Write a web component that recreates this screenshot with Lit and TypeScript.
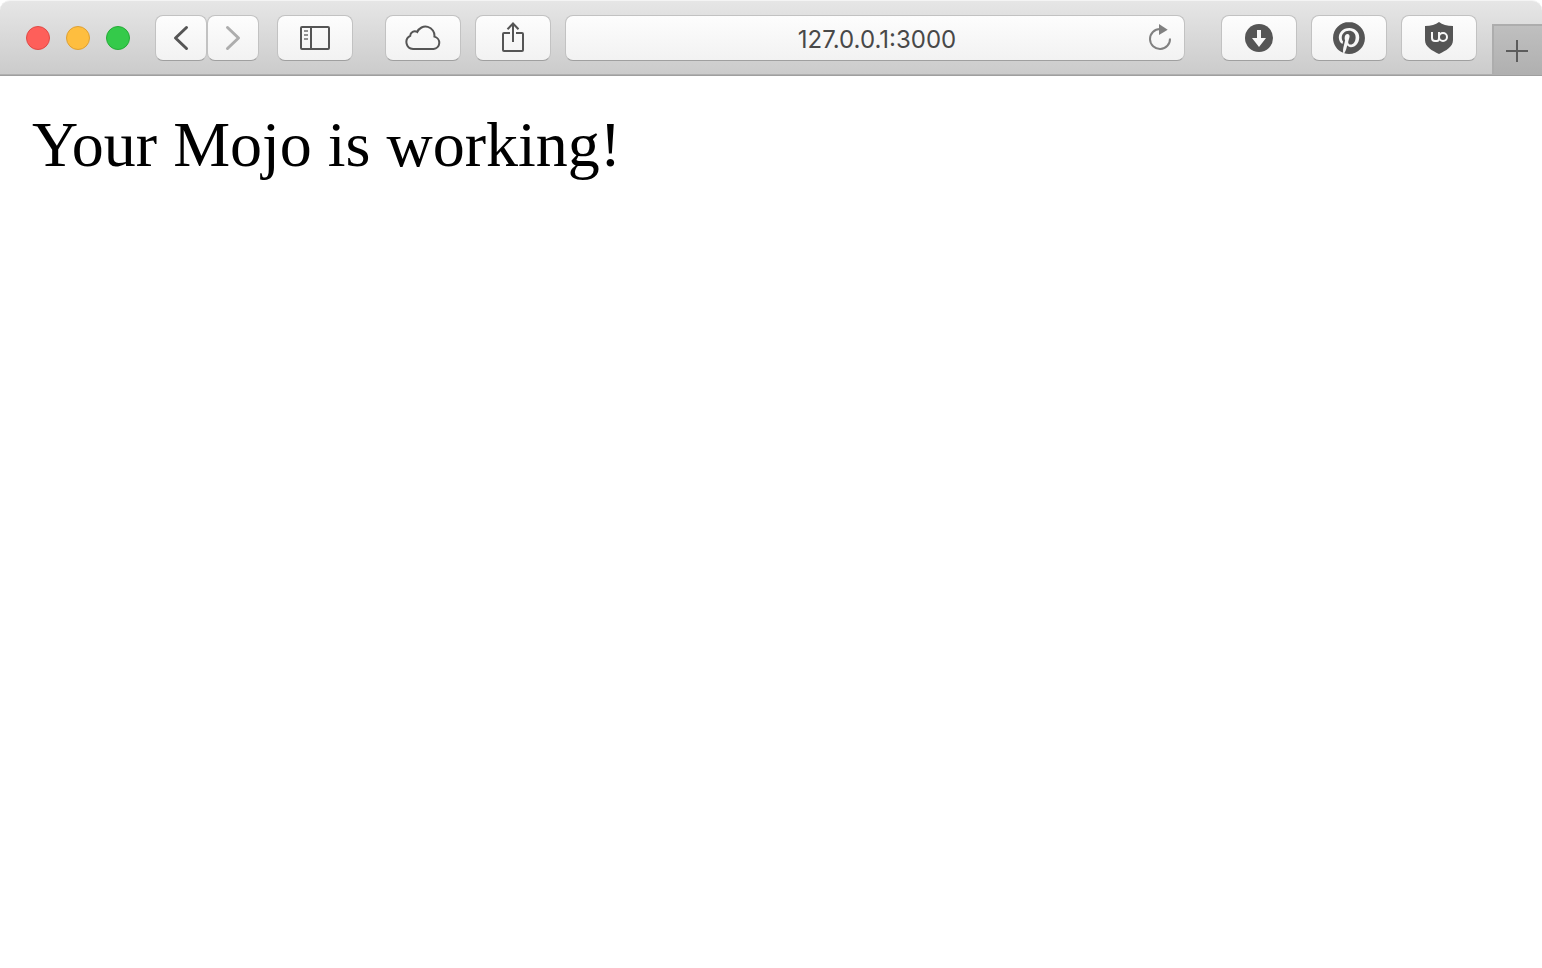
import { LitElement, html, css, svg } from "lit";
import { customElement } from "lit/decorators.js";

const icons = {
  back: svg`<path d="M23.5 7.5 12.5 18l11 10.5" stroke-width="3" stroke-linecap="round" stroke-linejoin="round"/>`,
  forward: svg`<path d="M12.5 7.5l11 10.5-11 10.5" stroke-width="3" stroke-linecap="round" stroke-linejoin="round"/>`,
  sidebar: svg`<rect x="4" y="7" width="28" height="22" rx="1"/><path d="M14 7v22"/><path class="faint" d="M7 11h4M7 15h4M7 19h4"/>`,
  cloud: svg`<path d="M8 29A7 7 0 0 1 5.2 15.8A4.6 4.6 0 0 1 12.2 12A9 9 0 0 1 29.4 16.6A6.3 6.3 0 0 1 28.6 29Z"/>`,
  share: svg`<path d="M15 13H9q-1 0-1 1v16q0 1 1 1h18q1 0 1-1V14q0-1-1-1h-6M18 22V4M12.5 9.3 18 3.5l5.5 5.8"/>`,
  reload: svg`<path d="M28 18.5A10 10 0 1 1 18 9"/><path class="solid" d="M17 4l8.7 5.7L17 15z"/>`,
  download: svg`<circle class="solid" cx="18" cy="18" r="14"/><path class="cut" d="M16 10h4v8h5l-7 9-7-9h5z"/>`,
  pinterest: svg`<path class="solid" transform="translate(2 2) scale(1.3333)" d="M12.017 0C5.396 0 .029 5.367.029 11.987c0 5.079 3.158 9.417 7.618 11.162-.105-.949-.199-2.403.041-3.439.219-.937 1.406-5.957 1.406-5.957s-.359-.72-.359-1.781c0-1.663.967-2.911 2.168-2.911 1.024 0 1.518.769 1.518 1.688 0 1.029-.653 2.567-.992 3.992-.285 1.193.6 2.165 1.775 2.165 2.128 0 3.768-2.245 3.768-5.487 0-2.861-2.063-4.869-5.008-4.869-3.41 0-5.409 2.562-5.409 5.199 0 1.033.394 2.143.889 2.741.099.12.112.225.085.345-.09.375-.293 1.199-.334 1.363-.053.225-.172.271-.401.165-1.495-.69-2.433-2.878-2.433-4.646 0-3.776 2.748-7.252 7.92-7.252 4.158 0 7.392 2.967 7.392 6.923 0 4.135-2.607 7.462-6.233 7.462-1.214 0-2.354-.629-2.758-1.379l-.749 2.848c-.269 1.045-1.004 2.352-1.498 3.146 1.123.345 2.306.535 3.55.535 6.607 0 11.985-5.365 11.985-11.987C23.97 5.39 18.592.026 11.985.026z"/>`,
  shield: svg`<path class="solid" d="M18 2Q13 6 4 6v14c0 7 7 10.500 14 14c7-3.500 14-7 14-14V6Q23 6 18 2z"/><path class="mark" d="M11 12v6q0 3 3 3h2q2 0 2-3v-6"/><circle class="mark" cx="22" cy="17" r="4"/>`,
  plus: svg`<path d="M7 18h22M18 7v22"/>`,
};

const icon = (name: keyof typeof icons) =>
  html`<svg class="icon" viewBox="0 0 36 36" aria-hidden="true">${icons[name]}</svg>`;

@customElement("app-root")
export class AppRoot extends LitElement {
  static styles = css`
    :host {
      display: block;
      min-height: 100vh;
      background: #fff;
    }
    * {
      box-sizing: border-box;
    }
    .toolbar {
      display: flex;
      align-items: center;
      height: 76px;
      padding-left: 26px;
      border-top: 1px solid #f4f4f4;
      border-bottom: 1px solid #9f9f9f;
      border-radius: 10px 10px 0 0;
      background: linear-gradient(#e6e6e6, #cbcbcb);
      box-shadow: inset 0 -1px #b0b0b0;
    }
    button {
      margin: 0;
      padding: 0;
      font: inherit;
    }
    .lights {
      display: flex;
      gap: 16px;
      margin-right: 25px;
    }
    .light {
      width: 24px;
      height: 24px;
      border: 1px solid;
      border-radius: 50%;
    }
    .close {
      background: #fe5f5a;
      border-color: #e04a46;
    }
    .minimize {
      background: #febe3f;
      border-color: #dea034;
    }
    .zoom {
      background: #34ca4a;
      border-color: #25ab37;
    }
    .tool,
    .address {
      display: flex;
      align-items: center;
      height: 46px;
      border: 1px solid #c2c2c2;
      border-bottom-color: #a0a0a0;
      border-radius: 8px;
      background: linear-gradient(#fdfdfd, #f2f2f2);
    }
    .tool {
      flex: none;
      justify-content: center;
      width: 76px;
      color: #555;
    }
    .history {
      display: flex;
      margin-right: 18px;
    }
    .history .tool {
      width: 52px;
    }
    .history .tool:disabled {
      color: #adadad;
    }
    .tabs {
      display: flex;
      gap: 14px;
      margin-left: 32px;
    }
    .extensions {
      display: flex;
      gap: 14px;
      margin: 0 15px 0 36px;
    }
    .address {
      flex: 1;
      min-width: 0;
      margin-left: 14px;
      padding: 0 6px 0 46px;
    }
    .url {
      flex: 1;
      min-width: 0;
      height: 44px;
      padding: 2px 0 0;
      border: 0;
      outline: 0;
      background: none;
      color: #484848;
      font: 24px/32px Inter, sans-serif;
      text-align: center;
    }
    .reload {
      display: flex;
      border: 0;
      background: none;
      color: #808080;
    }
    .new-tab {
      display: flex;
      flex: none;
      align-self: flex-end;
      align-items: center;
      justify-content: center;
      width: 50px;
      height: 50px;
      margin-bottom: 1px;
      border: 0;
      background: linear-gradient(#c0c0c0, #b0b0b0);
      box-shadow: inset 2px 2px #adadad;
      color: #5c5c5c;
    }
    .new-tab .icon {
      margin-top: 4px;
    }
    .icon {
      display: block;
      width: 36px;
      height: 36px;
      fill: none;
      stroke: currentColor;
      stroke-width: 2;
    }
    .solid {
      fill: currentColor;
      stroke: none;
    }
    .cut {
      fill: #f8f8f8;
      stroke: none;
    }
    .mark {
      stroke: #f8f8f8;
    }
    .faint {
      stroke: #929292;
    }
    .page {
      padding: 32px;
    }
    .message {
      margin: 0;
      color: #000;
      font: 64px/74px "Liberation Serif", serif;
    }
  `;

  private tool(name: keyof typeof icons, label: string, disabled = false) {
    return html`<button class="tool" aria-label=${label} ?disabled=${disabled}>${icon(name)}</button>`;
  }

  render() {
    return html`
      <header class="toolbar">
        <div class="lights">
          <button class="light close" aria-label="Close"></button>
          <button class="light minimize" aria-label="Minimize"></button>
          <button class="light zoom" aria-label="Zoom"></button>
        </div>
        <nav class="history">
          ${this.tool("back", "Back")} ${this.tool("forward", "Forward", true)}
        </nav>
        ${this.tool("sidebar", "Show sidebar")}
        <div class="tabs">
          ${this.tool("cloud", "iCloud tabs")} ${this.tool("share", "Share")}
        </div>
        <div class="address">
          <input class="url" type="text" aria-label="Address" .value=${"127.0.0.1:3000"} spellcheck="false" />
          <button class="reload" aria-label="Reload">${icon("reload")}</button>
        </div>
        <div class="extensions">
          ${this.tool("download", "Downloads")} ${this.tool("pinterest", "Pinterest")}
          ${this.tool("shield", "uBlock Origin")}
        </div>
        <button class="new-tab" aria-label="New tab">${icon("plus")}</button>
      </header>
      <main class="page">
        <p class="message">Your Mojo is working!</p>
      </main>
    `;
  }
}
